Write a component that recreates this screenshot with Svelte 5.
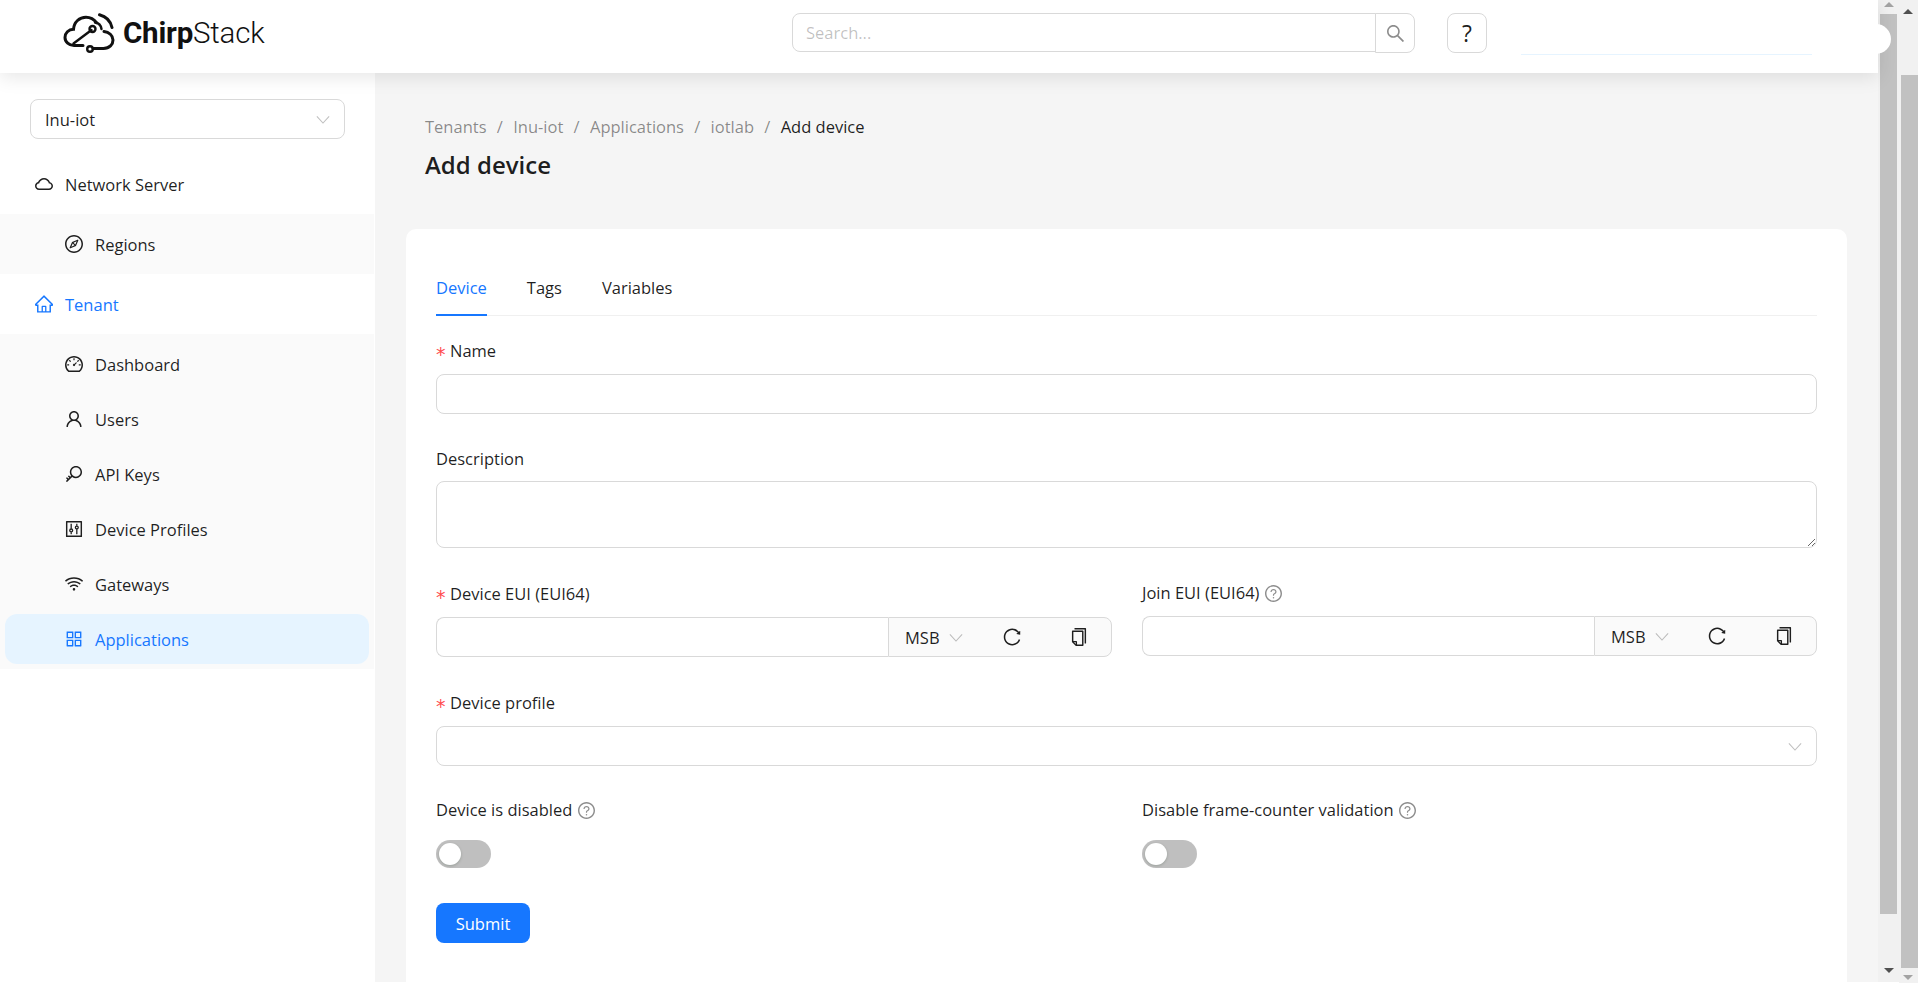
<script>
	const icons = {
		cloud: "M811.4 418.7C765.6 297.9 648.9 212 512.2 212S258.8 297.8 213 418.6C127.3 441.1 64 519.1 64 612c0 110.5 89.5 200 199.9 200h496.2C870.5 812 960 722.5 960 612c0-92.7-63.1-170.7-148.6-193.3zm36.3 281a123.07 123.07 0 01-87.6 36.3H263.9c-33.1 0-64.2-12.9-87.6-36.3A123.3 123.3 0 01140 612c0-28 9.1-54.3 26.2-76.3a125.7 125.7 0 0166.1-43.7l37.9-9.9 13.9-36.6c8.6-22.8 20.6-44.1 35.7-63.4a245.6 245.6 0 0152.4-49.9c41.1-28.9 89.5-44.2 140-44.2s98.9 15.3 140 44.2c19.9 14 37.5 30.8 52.4 49.9 15.1 19.3 27.1 40.7 35.7 63.4l13.8 36.5 37.8 10c54.3 14.5 92.1 63.8 92.1 120 0 33.1-12.9 64.3-36.3 87.7z",
		home: "M946.5 505L560.1 118.8l-25.9-25.9a31.5 31.5 0 00-44.4 0L77.5 505a63.9 63.9 0 00-18.8 46c.4 35.2 29.7 63.3 64.9 63.3h42.5V940h691.8V614.3h43.4c17.1 0 33.2-6.7 45.3-18.8a63.6 63.6 0 0018.7-45.3c0-17-6.7-33.1-18.8-45.2zM568 868H456V664h112v204zm217.9-325.7V868H632V640c0-22.1-17.9-40-40-40H432c-22.1 0-40 17.9-40 40v228H238.1V542.3h-96l370-369.7 23.1 23.1L882 542.3h-96.1z",
		compass: "M512 64C264.6 64 64 264.6 64 512s200.6 448 448 448 448-200.6 448-448S759.4 64 512 64zm0 820c-205.4 0-372-166.6-372-372s166.6-372 372-372 372 166.6 372 372-166.6 372-372 372zm198.4-588.1a32 32 0 00-24.5.5L414.9 415 296.4 686c-3.6 8.2-3.6 17.5 0 25.7 3.4 7.8 9.7 13.9 17.7 17 3.8 1.5 7.7 2.2 11.7 2.2 4.4 0 8.7-.9 12.8-2.7l271-118.6 118.5-271a32.06 32.06 0 00-17.7-42.7zM576.8 534.4l26.2 26.2-42.4 42.4-26.2-26.2L380 644.4 447.5 490 422 464.4l42.4-42.4 25.5 25.5L644.4 380l-67.6 154.4zM464.4 422L422 464.4l25.5 25.6 86.9 86.8 26.2 26.2 42.4-42.4-26.2-26.2-86.8-86.9z",
		dashboard: "M924.8 385.6a446.7 446.7 0 00-96-142.4 446.7 446.7 0 00-142.4-96C631.1 123.8 572.5 112 512 112s-119.1 11.8-174.4 35.2a446.7 446.7 0 00-142.4 96 446.7 446.7 0 00-96 142.4C75.8 440.9 64 499.5 64 560c0 132.7 58.3 257.7 159.9 343.1l1.7 1.4c5.8 4.8 13.1 7.5 20.6 7.5h531.7c7.5 0 14.8-2.7 20.6-7.5l1.7-1.4C901.7 817.7 960 692.7 960 560c0-60.5-11.9-119.1-35.2-174.4zM761.4 836H262.6A371.12 371.12 0 01140 560c0-99.4 38.7-192.8 109-263 70.3-70.3 163.7-109 263-109 99.4 0 192.8 38.7 263 109 70.3 70.3 109 163.7 109 263 0 105.6-44.5 205.5-122.6 276zM623.5 421.5a8.03 8.03 0 00-11.3 0L527.7 506c-18.7-5-39.4-.2-54.1 14.5a55.95 55.95 0 000 79.2 55.95 55.95 0 0079.2 0 55.87 55.87 0 0014.5-54.1l84.5-84.5c3.1-3.1 3.1-8.2 0-11.3l-28.3-28.3zM490 320h44c4.4 0 8-3.6 8-8v-80c0-4.4-3.6-8-8-8h-44c-4.4 0-8 3.6-8 8v80c0 4.4 3.6 8 8 8zm260 218v44c0 4.4 3.6 8 8 8h80c4.4 0 8-3.6 8-8v-44c0-4.4-3.6-8-8-8h-80c-4.4 0-8 3.6-8 8zm12.7-197.2l-31.1-31.1a8.03 8.03 0 00-11.3 0l-56.6 56.6a8.03 8.03 0 000 11.3l31.1 31.1c3.1 3.1 8.2 3.1 11.3 0l56.6-56.6c3.1-3.1 3.1-8.2 0-11.3zm-458.6-31.1a8.03 8.03 0 00-11.3 0l-31.1 31.1a8.03 8.03 0 000 11.3l56.6 56.6c3.1 3.1 8.2 3.1 11.3 0l31.1-31.1c3.1-3.1 3.1-8.2 0-11.3l-56.6-56.6zM262 530h-80c-4.4 0-8 3.6-8 8v44c0 4.4 3.6 8 8 8h80c4.4 0 8-3.6 8-8v-44c0-4.4-3.6-8-8-8z",
		user: "M858.5 763.6a374 374 0 00-80.6-119.5 375.63 375.63 0 00-119.5-80.6c-.4-.2-.8-.3-1.2-.5C719.5 518 760 444.7 760 362c0-137-111-248-248-248S264 225 264 362c0 82.7 40.5 156 102.8 201.1-.4.2-.8.3-1.2.5-44.8 18.9-85 46-119.5 80.6a375.63 375.63 0 00-80.6 119.5A371.7 371.7 0 00136 901.8a8 8 0 008 8.2h60c4.4 0 7.9-3.5 8-7.8 2-77.2 33-149.5 87.8-204.3 56.7-56.7 132-87.9 212.2-87.9s155.5 31.2 212.2 87.9C779 752.7 810 825 812 902.2c.1 4.4 3.6 7.8 8 7.8h60a8 8 0 008-8.2c-1-47.8-10.9-94.3-29.5-138.2zM512 534c-45.9 0-89.1-17.9-121.6-50.4S340 407.9 340 362c0-45.9 17.9-89.1 50.4-121.6S466.1 190 512 190s89.1 17.9 121.6 50.4S684 316.1 684 362c0 45.9-17.9 89.1-50.4 121.6S557.9 534 512 534z",
		key: "M608 112c-167.9 0-304 136.1-304 304 0 70.3 23.9 135 63.9 186.5l-41.1 41.1-62.3-62.3a8.15 8.15 0 00-11.4 0l-39.8 39.8a8.15 8.15 0 000 11.4l62.3 62.3-44.9 44.9-62.3-62.3a8.15 8.15 0 00-11.4 0l-39.8 39.8a8.15 8.15 0 000 11.4l62.3 62.3-65.3 65.3a8.03 8.03 0 000 11.3l42.3 42.3c3.1 3.1 8.2 3.1 11.3 0l253.6-253.6A304.06 304.06 0 00608 720c167.9 0 304-136.1 304-304S775.9 112 608 112zm161.2 465.2C726.2 620.3 668.9 644 608 644c-60.9 0-118.2-23.7-161.2-66.8-43.1-43-66.8-100.3-66.8-161.2 0-60.9 23.7-118.2 66.8-161.2 43-43.1 100.3-66.8 161.2-66.8 60.9 0 118.2 23.7 161.2 66.8 43.1 43 66.8 100.3 66.8 161.2 0 60.9-23.7 118.2-66.8 161.2z",
		control: "M880 112H144c-17.7 0-32 14.3-32 32v736c0 17.7 14.3 32 32 32h736c17.7 0 32-14.3 32-32V144c0-17.7-14.3-32-32-32zm-40 728H184V184h656v656zM340 683v77c0 4.4 3.6 8 8 8h48c4.4 0 8-3.6 8-8v-77c-10 3-21 5-32 5s-22-2-32-5zm64-198V264c0-4.4-3.6-8-8-8h-48c-4.4 0-8 3.6-8 8v221c10-3 21-5 32-5s22 2 32 5zm-32-5a104 104 0 100 208 104 104 0 100-208zm0 64a40 40 0 110 80 40 40 0 110-80zM620 341V264c0-4.4 3.6-8 8-8h48c4.4 0 8 3.600 8 8v77c-10-3-21-5-32-5s-22 2-32 5zm64 198v221c0 4.4-3.6 8-8 8h-48c-4.4 0-8-3.6-8-8V539c10 3 21 5 32 5s22-2 32-5zm-32-203a104 104 0 100 208 104 104 0 100-208zm0 64a40 40 0 110 80 40 40 0 110-80z",
		wifi: "M723 620.5C666.8 571.6 593.4 542 513 542s-153.8 29.6-210.1 78.6a8.1 8.1 0 00-.8 11.2l36 42.9c2.9 3.4 8 3.8 11.4.9C393.1 637.2 450.3 614 513 614s119.9 23.2 163.5 61.5c3.4 2.9 8.5 2.5 11.4-.9l36-42.9c2.8-3.3 2.4-8.3-.9-11.2zm117.4-140.1C751.7 406.5 637.6 362 513 362s-238.7 44.5-327.5 118.4a8.05 8.05 0 00-1 11.3l36 42.9c2.8 3.4 7.9 3.8 11.2 1C308 472.2 406.1 434 513 434s205 38.2 281.2 101.6c3.4 2.8 8.4 2.4 11.2-1l36-42.9c2.8-3.4 2.4-8.5-1-11.3zm116.7-139C835.7 241.8 680.3 182 511 182c-168.2 0-322.6 59-443.7 157.4a8 8 0 00-1.1 11.4l36 42.9c2.8 3.3 7.8 3.8 11.1 1.1C222 306.7 360.3 254 511 254c151.8 0 291 53.5 400 142.7 3.4 2.8 8.4 2.3 11.2-1.1l36-42.9c2.9-3.4 2.4-8.5-1.1-11.3zM448 778a64 64 0 10128 0 64 64 0 10-128 0z",
		appstore: "M464 144H160c-8.8 0-16 7.2-16 16v304c0 8.8 7.2 16 16 16h304c8.8 0 16-7.2 16-16V160c0-8.8-7.2-16-16-16zm-52 268H212V212h200v200zm452-268H560c-8.8 0-16 7.2-16 16v304c0 8.8 7.2 16 16 16h304c8.8 0 16-7.2 16-16V160c0-8.8-7.2-16-16-16zm-52 268H612V212h200v200zM464 544H160c-8.8 0-16 7.2-16 16v304c0 8.8 7.2 16 16 16h304c8.8 0 16-7.2 16-16V560c0-8.8-7.2-16-16-16zm-52 268H212V612h200v200zm452-268H560c-8.8 0-16 7.2-16 16v304c0 8.8 7.2 16 16 16h304c8.8 0 16-7.2 16-16V560c0-8.8-7.2-16-16-16zm-52 268H612V612h200v200z",
		search: "M909.6 854.5L649.9 594.8C690.2 542.7 712 479 712 412c0-80.2-31.3-155.4-87.9-212.1-56.6-56.7-132-87.9-212.1-87.9s-155.5 31.3-212.1 87.9C143.2 256.5 112 331.8 112 412c0 80.1 31.3 155.5 87.9 212.1C256.5 680.8 331.8 712 412 712c67 0 130.6-21.8 182.7-62l259.7 259.6a8.2 8.2 0 0011.6 0l43.6-43.5a8.2 8.2 0 000-11.6zM570.4 570.4C528 612.7 471.8 636 412 636s-116-23.3-158.4-65.6C211.3 528 188 471.8 188 412s23.3-116.1 65.6-158.4C296 211.3 352.2 188 412 188s116.1 23.2 158.4 65.6S636 352.2 636 412s-23.3 116.1-65.6 158.4z",
		reload: "M909.1 209.3l-56.4 44.1C775.8 155.1 656.2 92 521.9 92 290 92 102.3 279.5 102 511.5 101.7 743.7 289.8 932 521.9 932c181.3 0 335.8-115 394.6-276.1 1.5-4.2-.7-8.9-4.9-10.3l-56.7-19.5a8 8 0 00-10.1 4.8c-1.8 5-3.8 10-5.900 14.9-17.3 41-42.1 77.8-73.7 109.4A344.77 344.77 0 01655.9 829c-42.3 17.9-87.4 27-133.8 27-46.5 0-91.5-9.1-133.8-27A341.5 341.5 0 01279 755.2a342.16 342.16 0 01-73.7-109.4c-17.9-42.4-27-87.4-27-133.9s9.1-91.5 27-133.9c17.3-41 42.1-77.8 73.7-109.4 31.6-31.6 68.4-56.4 109.3-73.8 42.3-17.9 87.4-27 133.8-27 46.5 0 91.5 9.1 133.8 27a341.5 341.5 0 01109.3 73.8c9.9 9.9 19.2 20.4 27.8 31.4l-60.2 47a8 8 0 003 14.1l175.6 43c5 1.2 9.9-2.6 9.9-7.7l.8-180.9c-.1-6.6-7.8-10.3-13-6.2z",
		copy: "M832 64H296c-4.4 0-8 3.6-8 8v56c0 4.4 3.6 8 8 8h496v688c0 4.4 3.6 8 8 8h56c4.4 0 8-3.6 8-8V96c0-17.7-14.3-32-32-32zM704 192H192c-17.7 0-32 14.3-32 32v530.7c0 8.5 3.4 16.6 9.4 22.6l173.3 173.3c2.2 2.2 4.7 4 7.4 5.5v1.9h4.2c3.5 1.3 7.2 2 11 2H704c17.7 0 32-14.3 32-32V224c0-17.7-14.3-32-32-32zM350 856.2L263.9 770H350v86.2zM664 888H414V746c0-22.1-17.900-40-40-40H232V264h432v624z",
		help: "M512 64C264.6 64 64 264.6 64 512s200.6 448 448 448 448-200.6 448-448S759.4 64 512 64zm0 820c-205.4 0-372-166.6-372-372s166.6-372 372-372 372 166.6 372 372-166.6 372-372 372zM623.6 316.7C593.6 290.4 554 276 512 276s-81.6 14.5-111.6 40.7C369.2 344 352 380.7 352 420v7.6c0 4.4 3.6 8 8 8h48c4.4 0 8-3.6 8-8V420c0-44.1 43.1-80 96-80s96 35.9 96 80c0 31.1-22 59.6-56.1 72.7-21.2 8.1-39.2 22.3-52.1 40.9-13.1 19-19.9 41.8-19.900 64.9V620c0 4.4 3.6 8 8 8h48c4.4 0 8-3.6 8-8v-22.7a48.3 48.3 0 0130.9-44.8c59-22.7 97.1-74.7 97.1-132.500.1-39.3-17.1-76-48.3-103.3zM472 732a40 40 0 1080 0 40 40 0 10-80 0z",
	};

	const tenantItems = [
		{ label: "Dashboard", icon: "dashboard" },
		{ label: "Users", icon: "user" },
		{ label: "API Keys", icon: "key" },
		{ label: "Device Profiles", icon: "control" },
		{ label: "Gateways", icon: "wifi" },
		{ label: "Applications", icon: "appstore", active: true },
	];

	const crumbs = ["Tenants", "Inu-iot", "Applications", "iotlab"];
	const tabs = ["Device", "Tags", "Variables"];
</script>

{#snippet icon(name, cls = "")}
	<svg class="icon {cls}" viewBox="64 64 896 896" aria-hidden="true"><path d={icons[name]} /></svg>
{/snippet}

{#snippet chevron(cls = "")}
	<svg class="chevron {cls}" viewBox="0 0 16 10" aria-hidden="true"><path d="M1 1.500 8 9l7-7.500" /></svg>
{/snippet}

{#snippet euiGroup()}
	<div class="eui-group">
		<input class="eui-input" type="text" />
		<div class="addon">
			<span class="msb">MSB</span>
			{@render chevron("msb-chevron")}
			<button class="addon-btn reload">{@render icon("reload")}</button>
			<button class="addon-btn copy">{@render icon("copy")}</button>
		</div>
	</div>
{/snippet}

<div class="page">
	<div class="app">
		<header class="topbar">
			<div class="logo">
				<svg class="logo-mark" viewBox="0 0 52 40" aria-hidden="true">
					<path d="M20 32.500H11C6 32.500 2 29 2 24.500 2 20 5.500 16.500 10.500 16.300 11 9 16.500 4.200 23 4.200c4.500 0 8 2 10.500 5.500" />
					<path d="M41 18.500c5 .500 9 4 9 8.500 0 4.500-3.500 8.500-9.500 8.500H30" />
					<path d="M10.500 30.500 28.500 17" stroke-width="2.400" />
					<circle cx="29.500" cy="16" r="3" stroke-width="2.400" />
					<circle cx="27" cy="36" r="2.800" stroke-width="2.400" />
					<path d="M32 9.500c3.500.500 6 3 6.500 6.500" stroke-width="2.400" />
					<path d="M36.500 1.800C43 3.500 47.500 8 49 14.500" />
				</svg>
				<span class="logo-text"><b>Chirp</b>Stack</span>
			</div>
			<div class="search">
				<input class="search-input" type="text" placeholder="Search..." />
				<button class="search-btn">{@render icon("search")}</button>
			</div>
			<button class="help-btn">?</button>
			<div class="user-line"></div>
			<div class="blob"></div>
		</header>

		<div class="body">
			<aside class="sidebar">
				<div class="tenant-select">
					<span>Inu-iot</span>
					{@render chevron()}
				</div>
				<nav class="menu">
					<div class="item top">{@render icon("cloud")}<span>Network Server</span></div>
					<div class="sub">
						<div class="item child">{@render icon("compass")}<span>Regions</span></div>
					</div>
					<div class="item top selected">{@render icon("home")}<span>Tenant</span></div>
					<div class="sub">
						{#each tenantItems as it}
							<div class="item child" class:active={it.active}>{@render icon(it.icon)}<span>{it.label}</span></div>
						{/each}
					</div>
				</nav>
			</aside>

			<main class="content">
				<div class="page-head">
					<div class="crumbs">
						{#each crumbs as c}
							<span class="crumb">{c}</span><span class="sep">/</span>
						{/each}
						<span class="crumb last">Add device</span>
					</div>
					<h1>Add device</h1>
				</div>

				<section class="card">
					<div class="tabs">
						{#each tabs as t, i}
							<div class="tab" class:on={i === 0}>{t}</div>
						{/each}
					</div>

					<form class="form" onsubmit={(e) => e.preventDefault()}>
						<div class="field">
							<div class="label"><i>*</i>Name</div>
							<input class="text" type="text" />
						</div>
						<div class="field desc-field">
							<div class="label desc">Description</div>
							<textarea class="area"></textarea>
						</div>
						<div class="cols eui-row">
							<div class="field">
								<div class="label"><i>*</i>Device EUI (EUI64)</div>
								{@render euiGroup()}
							</div>
							<div class="field">
								<div class="label join">Join EUI (EUI64){@render icon("help", "hint")}</div>
								{@render euiGroup()}
							</div>
						</div>
						<div class="field profile">
							<div class="label"><i>*</i>Device profile</div>
							<div class="select">{@render chevron()}</div>
						</div>
						<div class="cols">
							<div class="field">
								<div class="label">Device is disabled{@render icon("help", "hint")}</div>
								<div class="switch-row"><span class="switch"><span class="knob"></span></span></div>
							</div>
							<div class="field">
								<div class="label">Disable frame-counter validation{@render icon("help", "hint")}</div>
								<div class="switch-row"><span class="switch"><span class="knob"></span></span></div>
							</div>
						</div>
						<button class="submit" type="submit">Submit</button>
					</form>
				</section>
			</main>
		</div>
	</div>

	<div class="bar inner">
		<span class="arrow up dim"></span>
		<span class="thumb"></span>
		<span class="arrow down"></span>
	</div>
	<div class="bar outer">
		<span class="arrow up"></span>
		<span class="thumb"></span>
		<span class="arrow down dim"></span>
	</div>
</div>

<style>
	:global(body) {
		margin: 0;
		background: #fff;
		overflow: hidden;
	}

	.page {
		display: flex;
		height: 983px;
		overflow: hidden;
		font-family: "Open Sans", "Noto Sans", sans-serif;
		font-size: 16.5px;
		color: rgba(0, 0, 0, 0.88);
	}

	.app {
		width: 1878px;
		height: 982px;
		display: flex;
		flex-direction: column;
		position: relative;
	}

	/* top bar */
	.topbar {
		height: 73px;
		flex: none;
		background: #fff;
		display: flex;
		align-items: flex-start;
		position: relative;
		z-index: 3;
		box-shadow: 0 4px 18px rgba(0, 0, 0, 0.1);
	}

	.logo {
		margin: 13px 0 0 63px;
		width: 729px;
		display: flex;
		align-items: center;
		gap: 8px;
		height: 40px;
	}

	.logo-mark {
		width: 52px;
		height: 40px;
		fill: none;
		stroke: #111;
		stroke-width: 3;
		stroke-linecap: round;
	}

	.logo-text {
		font-family: Roboto, sans-serif;
		font-size: 29.5px;
		font-weight: 300;
		color: #111;
		letter-spacing: -0.2px;
	}

	.logo-text b {
		font-weight: 700;
	}

	.search {
		margin-top: 13px;
		width: 623px;
		height: 40px;
		display: flex;
	}

	.search-input {
		flex: 1;
		min-width: 0;
		box-sizing: border-box;
		height: 39px;
		border: 1px solid #d9d9d9;
		border-radius: 8px 0 0 8px;
		padding: 0 13px;
		font: inherit;
		outline: none;
	}

	.search-input::placeholder {
		color: rgba(0, 0, 0, 0.25);
	}

	.search-btn {
		width: 40px;
		box-sizing: border-box;
		height: 40px;
		margin-left: -1px;
		border: 1px solid #d9d9d9;
		border-radius: 0 8px 8px 0;
		background: #fff;
		padding: 0;
		display: flex;
		align-items: center;
		justify-content: center;
		color: rgba(0, 0, 0, 0.45);
	}

	.search-btn .icon {
		width: 19px;
		height: 19px;
	}

	.help-btn {
		margin: 13px 0 0 32px;
		width: 40px;
		height: 40px;
		box-sizing: border-box;
		border: 1px solid #d9d9d9;
		border-radius: 8px;
		background: #fff;
		padding: 0;
		font: inherit;
		font-size: 23px;
		color: rgba(0, 0, 0, 0.88);
	}

	.user-line {
		margin: 54px 0 0 34px;
		width: 291px;
		height: 1px;
		background: #e6f4ff;
	}

	.blob {
		position: absolute;
		left: 1861px;
		top: 24px;
		width: 30px;
		height: 30px;
		border-radius: 50%;
		background: #fff;
	}

	/* shell */
	.body {
		flex: 1;
		min-height: 0;
		display: flex;
	}

	.sidebar {
		width: 375px;
		flex: none;
		background: #fff;
	}

	.tenant-select {
		margin: 26px 30px 0;
		height: 40px;
		box-sizing: border-box;
		border: 1px solid #d9d9d9;
		border-radius: 8px;
		padding: 0 14px;
		display: flex;
		align-items: center;
		justify-content: space-between;
		line-height: 40px;
	}

	.tenant-select span {
		padding-top: 2px;
	}

	.menu {
		margin-top: 20px;
		width: 374px;
	}

	.item {
		height: 50px;
		display: flex;
		align-items: center;
		gap: 12px;
		box-sizing: border-box;
		border-radius: 12px;
	}

	.top {
		margin: 5px 0;
		padding-left: 35px;
	}

	.selected {
		color: #1677ff;
	}

	.selected .icon {
		color: #1677ff;
	}

	.sub {
		background: #fafafa;
		padding: 5px 5px;
	}

	.child {
		padding-left: 60px;
		margin-bottom: 5px;
	}

	.child:last-child {
		margin-bottom: 0;
	}

	.active {
		background: #e6f4ff;
		color: #1677ff;
	}

	.icon {
		width: 18px;
		height: 18px;
		flex: none;
		fill: currentColor;
	}

	.chevron {
		width: 14px;
		height: 9px;
		fill: none;
		stroke: rgba(0, 0, 0, 0.25);
		stroke-width: 1.2;
		flex: none;
	}

	/* content */
	.content {
		flex: 1;
		min-width: 0;
		background: #f5f5f5;
		padding: 0 31px;
		overflow: hidden;
	}

	.page-head {
		padding: 41px 0 0 19px;
		height: 156px;
		box-sizing: border-box;
	}

	.crumbs {
		display: flex;
		gap: 10.3px;
		height: 26px;
		line-height: 26px;
		color: rgba(0, 0, 0, 0.45);
	}

	.crumb.last {
		color: rgba(0, 0, 0, 0.88);
	}

	.sep {
		color: rgba(0, 0, 0, 0.45);
	}

	h1 {
		margin: 9px 0 0;
		font-size: 24px;
		line-height: 32px;
		font-weight: 600;
	}

	.card {
		background: #fff;
		border-radius: 10px 10px 0 0;
		padding: 30px 30px 40px;
		height: 753px;
		box-sizing: border-box;
	}

	.tabs {
		display: flex;
		gap: 40px;
		height: 57px;
		box-sizing: border-box;
		border-bottom: 1px solid #f0f0f0;
	}

	.tab {
		line-height: 58px;
		height: 57px;
		box-sizing: border-box;
	}

	.tab.on {
		color: #1677ff;
		border-bottom: 2px solid #1677ff;
	}

	.form {
		padding-top: 20px;
	}

	.field {
		margin-bottom: 30px;
		min-width: 0;
	}

	.desc-field,
	.eui-row .field {
		margin-bottom: 31px;
	}

	.profile {
		margin-bottom: 29px;
	}

	.label {
		height: 30px;
		line-height: 30px;
		margin-bottom: 8px;
		display: flex;
		align-items: center;
	}

	.label i {
		font-style: normal;
		color: #ff4d4f;
		width: 14px;
		height: 30px;
		line-height: 36px;
		font-family: "DejaVu Sans", sans-serif;
		font-size: 19px;
	}

	.desc {
		margin-bottom: 7px;
	}

	.join {
		margin-bottom: 7px;
		transform: translateY(-1px);
	}

	.hint {
		margin-left: 5.5px;
		width: 17px;
		height: 17px;
		color: rgba(0, 0, 0, 0.45);
	}

	.text,
	.eui-input {
		width: 100%;
		box-sizing: border-box;
		height: 40px;
		border: 1px solid #d9d9d9;
		border-radius: 8px;
		outline: none;
		font: inherit;
		padding: 0 13px;
	}

	.area {
		display: block;
		width: 100%;
		height: 67px;
		box-sizing: border-box;
		border: 1px solid #d9d9d9;
		border-radius: 8px;
		outline: none;
		font: inherit;
		padding: 6px 13px;
		resize: vertical;
	}

	.cols {
		display: grid;
		grid-template-columns: 676px 675px;
		gap: 30px;
	}

	.eui-group {
		display: flex;
		height: 40px;
	}

	.eui-input {
		flex: 1;
		min-width: 0;
		border-radius: 8px 0 0 8px;
		border-right: 0;
	}

	.addon {
		width: 223px;
		flex: none;
		box-sizing: border-box;
		height: 40px;
		border: 1px solid #d9d9d9;
		border-radius: 0 8px 8px 0;
		background: #fafafa;
		display: flex;
		align-items: center;
		padding-left: 16px;
	}

	.field:first-child .addon {
		width: 224px;
	}

	.msb-chevron {
		margin-left: 9px;
	}

	.addon-btn {
		border: 0;
		background: none;
		padding: 0;
		display: flex;
		color: rgba(0, 0, 0, 0.88);
	}

	.reload {
		margin-left: 39px;
	}

	.field:first-child .reload {
		margin-left: 40px;
	}

	.copy {
		margin-left: 49px;
	}

	.select {
		height: 40px;
		box-sizing: border-box;
		border: 1px solid #d9d9d9;
		border-radius: 8px;
		display: flex;
		align-items: center;
		justify-content: flex-end;
		padding-right: 14px;
	}

	.switch-row {
		height: 40px;
		display: flex;
		align-items: flex-end;
		padding-bottom: 5px;
		box-sizing: border-box;
	}

	.switch {
		width: 55px;
		height: 28px;
		border-radius: 14px;
		background: rgba(0, 0, 0, 0.25);
		display: block;
		position: relative;
	}

	.knob {
		position: absolute;
		left: 3px;
		top: 3px;
		width: 22px;
		height: 22px;
		border-radius: 50%;
		background: #fff;
		box-shadow: 0 1px 3px rgba(0, 35, 11, 0.2);
	}

	.submit {
		width: 94px;
		height: 40px;
		border: 0;
		border-radius: 8px;
		background: #1677ff;
		color: #fff;
		font: inherit;
		padding: 0;
	}

	/* browser scrollbars, two nested ones */
	.bar {
		flex: none;
		background: #f1f1f1;
		display: flex;
		flex-direction: column;
		position: relative;
	}

	.inner {
		width: 21px;
		height: 982px;
		align-items: center;
	}

	.outer {
		width: 19px;
		height: 983px;
		align-items: flex-end;
	}

	.thumb {
		display: block;
		width: 17px;
		background: #c1c1c1;
	}

	.inner .thumb {
		height: 900px;
		margin-top: 7px;
	}

	.outer .thumb {
		height: 893px;
		margin-top: 61px;
	}

	.arrow {
		display: block;
		width: 0;
		height: 0;
		border-left: 5px solid transparent;
		border-right: 5px solid transparent;
	}

	.arrow.up {
		border-bottom: 5px solid #505050;
	}

	.arrow.down {
		border-top: 5px solid #505050;
	}

	.arrow.up.dim {
		border-bottom-color: #a3a3a3;
	}

	.arrow.down.dim {
		border-top-color: #a3a3a3;
	}

	.inner .arrow.up {
		margin-top: 2px;
	}

	.inner .arrow.down {
		margin-top: 54px;
	}

	.outer .arrow {
		margin-right: 5px;
	}

	.outer .arrow.up {
		margin-top: 9px;
	}

	.outer .arrow.down {
		margin-top: 7px;
	}
</style>
